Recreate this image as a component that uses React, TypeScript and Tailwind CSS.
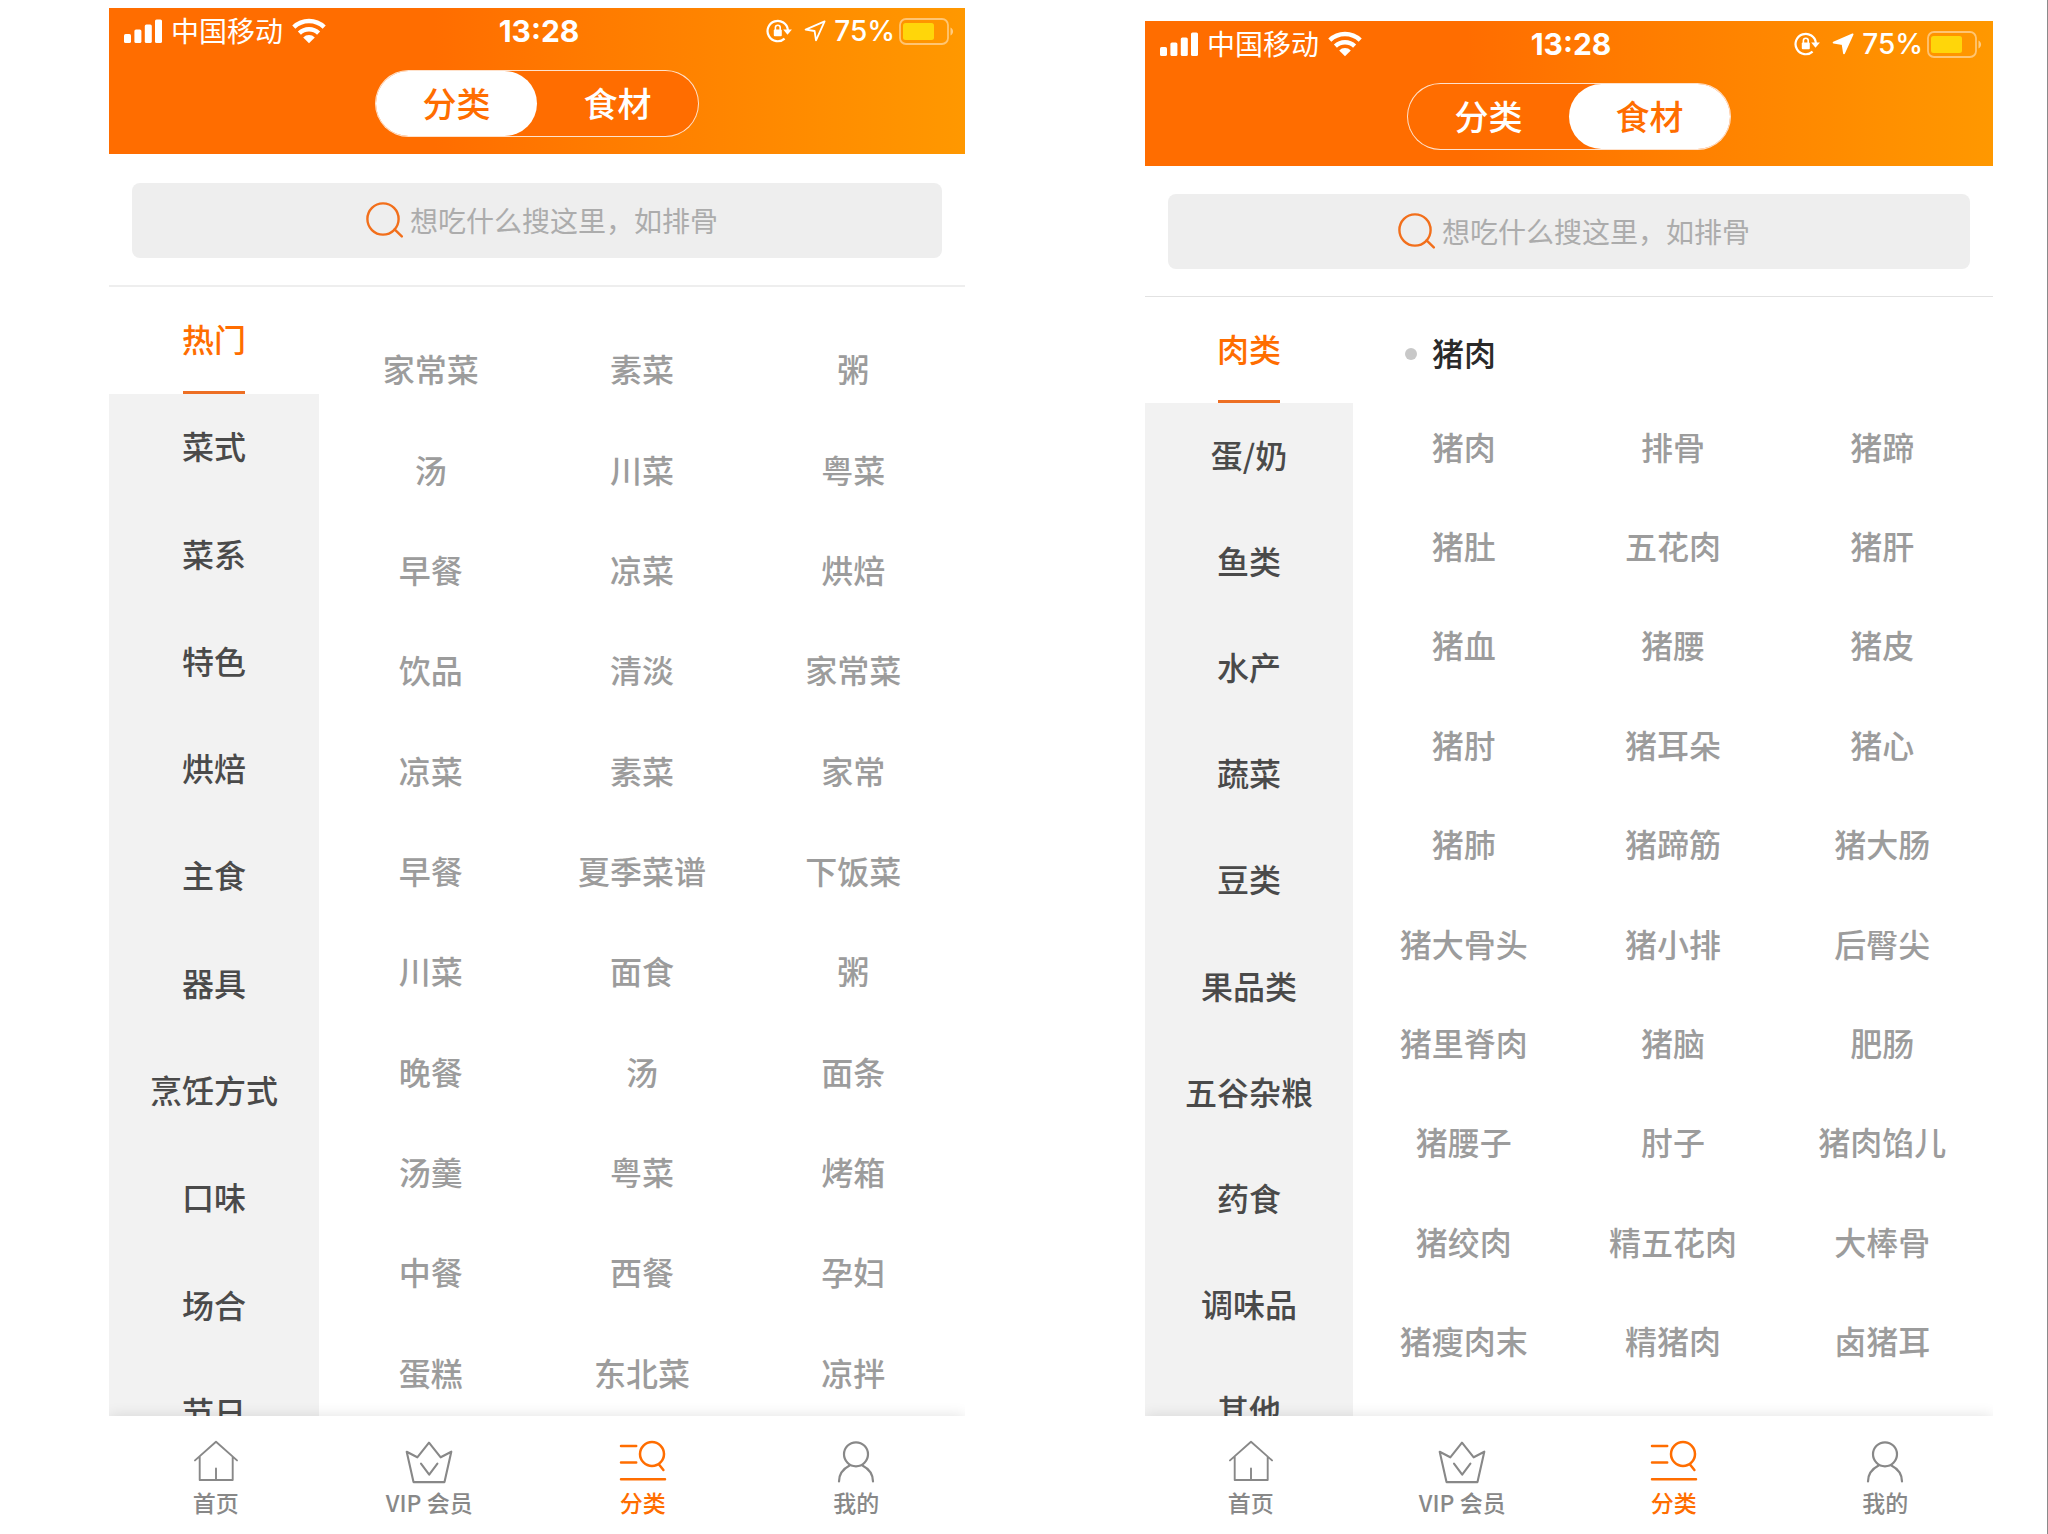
import { useState } from "react";
import type { ReactNode } from "react";
import clsx from "clsx";

const HOT_GROUPS = ["热门", "菜式", "菜系", "特色", "烘焙", "主食", "器具", "烹饪方式", "口味", "场合", "节日"];

const HOT_ITEMS = [
  "家常菜", "素菜", "粥",
  "汤", "川菜", "粤菜",
  "早餐", "凉菜", "烘焙",
  "饮品", "清淡", "家常菜",
  "凉菜", "素菜", "家常",
  "早餐", "夏季菜谱", "下饭菜",
  "川菜", "面食", "粥",
  "晚餐", "汤", "面条",
  "汤羹", "粤菜", "烤箱",
  "中餐", "西餐", "孕妇",
  "蛋糕", "东北菜", "凉拌",
];

const FOOD_GROUPS = ["肉类", "蛋/奶", "鱼类", "水产", "蔬菜", "豆类", "果品类", "五谷杂粮", "药食", "调味品", "其他"];

const FOOD_ITEMS = [
  "猪肉", "排骨", "猪蹄",
  "猪肚", "五花肉", "猪肝",
  "猪血", "猪腰", "猪皮",
  "猪肘", "猪耳朵", "猪心",
  "猪肺", "猪蹄筋", "猪大肠",
  "猪大骨头", "猪小排", "后臀尖",
  "猪里脊肉", "猪脑", "肥肠",
  "猪腰子", "肘子", "猪肉馅儿",
  "猪绞肉", "精五花肉", "大棒骨",
  "猪瘦肉末", "精猪肉", "卤猪耳",
];

function SignalIcon() {
  return (
    <svg className="h-[25px] w-[38px]" viewBox="0 0 38 25" fill="currentColor" aria-hidden="true">
      <rect x="0" y="15" width="7" height="9" rx="1.6" />
      <rect x="10.4" y="10.5" width="7" height="13.5" rx="1.6" />
      <rect x="20.8" y="5.5" width="7" height="18.5" rx="1.6" />
      <rect x="31" y="0.5" width="7" height="23.5" rx="1.6" />
    </svg>
  );
}

function WifiIcon() {
  return (
    <svg className="h-[26px] w-[34px]" viewBox="0 0 34 26" aria-hidden="true">
      <g fill="none" stroke="currentColor" strokeWidth="4.4">
        <path d="M1.8 9.2a21.8 21.8 0 0 1 30.4 0" />
        <path d="M7.4 15.2a13.8 13.8 0 0 1 19.2 0" />
      </g>
      <path d="M11.2 19.4a8.4 8.4 0 0 1 11.6 0L17 25.2z" fill="currentColor" />
    </svg>
  );
}

function RotationLockIcon() {
  return (
    <svg className="h-6 w-[26px]" viewBox="0 0 26 24" aria-hidden="true">
      <path d="M18.6 19.6A10.2 10.2 0 1 1 21.9 11" fill="none" stroke="currentColor" strokeWidth="2.2" />
      <path d="M17.2 10.4h8.7l-4.4 5.4z" fill="currentColor" />
      <rect x="7.8" y="10.4" width="8" height="6.8" rx="1" fill="currentColor" />
      <path d="M9.4 11V8.6a2.4 2.4 0 0 1 4.8 0V11" fill="none" stroke="currentColor" strokeWidth="1.6" />
    </svg>
  );
}

function LocationIcon({ filled }: { filled: boolean }) {
  return (
    <svg className="h-[22px] w-[22px]" viewBox="0 0 22 22" aria-hidden="true">
      <path
        d="M20.6 1.4 1.6 9.6l9 1.4 1.4 9.4z"
        fill={filled ? "currentColor" : "none"}
        stroke="currentColor"
        strokeWidth="1.8"
        strokeLinejoin="round"
      />
    </svg>
  );
}

function BatteryIcon() {
  return (
    <svg className="h-[27px] w-[55px]" viewBox="0 0 55 27" aria-hidden="true">
      <rect x="1" y="1" width="48" height="25" rx="6" fill="none" stroke="#fff" strokeOpacity="0.45" strokeWidth="1.8" />
      <rect x="4" y="5" width="31" height="17" rx="2.5" fill="#ffd60a" />
      <path d="M51.5 9.5c3.4 1.4 3.4 6.6 0 8z" fill="#fff" fillOpacity="0.5" />
    </svg>
  );
}

function SearchIcon() {
  return (
    <svg className="h-9 w-[38px] shrink-0" viewBox="0 0 38 36" fill="none" stroke="#f26f1b" strokeWidth="2.4" strokeLinecap="round" aria-hidden="true">
      <circle cx="17" cy="17" r="15.6" />
      <path d="M28.6 27.4l7.2 7" />
    </svg>
  );
}

function NavSvg({ children, width = 2 }: { children: ReactNode; width?: number }) {
  return (
    <svg className="h-11 w-12" viewBox="0 0 48 44" fill="none" stroke="currentColor" strokeWidth={width} strokeLinecap="round" strokeLinejoin="round" aria-hidden="true">
      {children}
    </svg>
  );
}

const NAV = [
  {
    label: "首页",
    icon: (
      <NavSvg width={1.9}>
        <path d="M3 20.4 24 1.8l21 18.6M7.7 16.8V40h33V16.8M24 28.4V40" />
      </NavSvg>
    ),
  },
  {
    label: "VIP 会员",
    icon: (
      <NavSvg width={2.1}>
        <path d="M1.7 11.7l10.6 5.6L24 2.7l11.7 14.6 10.6-5.6-6.8 30.4h-31z" />
        <path d="M16 23.6l8.2 11 8.2-11" />
      </NavSvg>
    ),
  },
  {
    label: "分类",
    icon: (
      <NavSvg width={2.5}>
        <path d="M2 6h15.2M2 22.4h15.2M2 39.3h44M40 24.4l4.4 5.6" />
        <circle cx="33" cy="14" r="12" />
      </NavSvg>
    ),
  },
  {
    label: "我的",
    icon: (
      <NavSvg width={2.2}>
        <circle cx="24" cy="14.3" r="12" />
        <path d="M17.6 25.4C10.6 29 7 34.6 7 41.4M30.4 25.4C37.4 29 41 34.6 41 41.4" />
      </NavSvg>
    ),
  },
];

type PhoneProps = {
  id: string;
  initialTab: string;
  groups: string[];
  items: string[];
  title?: string;
  locating: boolean;
  className: string;
  headerClass: string;
  dividerClass: string;
  sidebarClass: string;
  groupsClass: string;
  itemsClass: string;
};

function Phone(p: PhoneProps) {
  const [tab, setTab] = useState(p.initialTab);
  const [group, setGroup] = useState(p.groups[0]);

  return (
    <section className={clsx("flex min-h-0 min-w-0 flex-col overflow-hidden", p.className)}>
      <header className={clsx("bg-linear-to-r from-[#ff6d00] from-38% to-[#ff9800] text-white", p.headerClass)}>
        <div className="grid h-[46px] grid-cols-[1fr_auto_1fr] items-center pl-[15px] pr-[11px]">
          <div className="flex items-center gap-[9px]">
            <SignalIcon />
            <span className="pb-[2px] text-[28px] leading-none">中国移动</span>
            <WifiIcon />
          </div>
          <time className="font-['Inter'] text-[30px] font-bold leading-none">13:28</time>
          <div className="flex items-center justify-end">
            <RotationLockIcon />
            <span className="ml-3">
              <LocationIcon filled={p.locating} />
            </span>
            <span className="ml-2 mr-1 font-['Inter'] text-[28px] font-medium leading-none">75%</span>
            <BatteryIcon />
          </div>
        </div>
        <div className="mx-auto mt-4 flex h-[67px] w-[324px] rounded-full border border-white/80 bg-[#ff6d00]">
          {["分类", "食材"].map((name) => (
            <button
              key={name}
              type="button"
              aria-pressed={tab === name}
              onClick={() => setTab(name)}
              className={clsx(
                "flex-1 rounded-full pb-[2px] text-[34px] font-medium leading-none",
                tab === name ? "bg-white text-[#ff6d00]" : "text-white",
              )}
            >
              {name}
            </button>
          ))}
        </div>
      </header>

      <div className={clsx("px-[23px]", p.dividerClass)}>
        <label htmlFor={p.id} className="flex h-[75px] items-center justify-center gap-[6px] rounded-lg bg-[#eeeeee] pb-[2px] pl-3">
          <SearchIcon />
          <input
            id={p.id}
            type="text"
            aria-label="搜索"
            placeholder="想吃什么搜这里，如排骨"
            className="h-10 w-[310px] bg-transparent text-[28px] text-[#444] outline-none placeholder:text-[#acacac]"
          />
        </label>
      </div>

      <div className="flex min-h-0 flex-1 overflow-hidden">
        <aside className={clsx("shrink-0 overflow-hidden bg-[#f2f2f2]", p.sidebarClass)}>
          <div className={clsx("grid auto-rows-fr", p.groupsClass)}>
            {p.groups.map((name) => (
              <button
                key={name}
                type="button"
                onClick={() => setGroup(name)}
                className={clsx(
                  "relative flex items-center justify-center pb-[5px] text-[32px] font-medium leading-none",
                  name === group ? "bg-white text-[#ff6d00]" : "text-[#4a4a4a]",
                )}
              >
                {name}
                {name === group && <span className="absolute bottom-0 left-1/2 h-[3px] w-[62px] -translate-x-1/2 bg-[#ed6f24]" />}
              </button>
            ))}
          </div>
        </aside>
        <main className={clsx("min-w-0 flex-1 overflow-hidden", p.title ? "pt-3" : "pt-[33px]")}>
          {p.title && (
            <h2 className="flex h-[89px] items-center gap-[15px] pl-[52px] text-[32px] font-medium leading-none text-[#2a2a2a]">
              <span className="size-3 rounded-full bg-[#c8c8c8]" />
              <span className="pb-1">{p.title}</span>
            </h2>
          )}
          <div className={clsx("grid auto-rows-fr grid-cols-3 px-[6px]", p.itemsClass)}>
            {p.items.map((name, i) => (
              <button key={i} type="button" className="pb-1 text-[32px] font-medium leading-none text-[#9c9c9c]">
                {name}
              </button>
            ))}
          </div>
        </main>
      </div>

      <nav className="relative grid h-[118px] shrink-0 grid-cols-4 bg-white pr-[2px] pt-6 shadow-[0_0_14px_rgba(0,0,0,0.12)]">
        {NAV.map((n) => (
          <a key={n.label} href="#" className={clsx("flex flex-col items-center gap-[6px]", n.label === "分类" ? "text-[#ff6d00]" : "text-[#888]")}>
            {n.icon}
            <span className="text-[23px] font-medium leading-6">{n.label}</span>
          </a>
        ))}
      </nav>
    </section>
  );
}

export default function App() {
  return (
    <div className="grid h-screen grid-cols-[856fr_848fr] gap-[180px] overflow-hidden border-r border-[#8a8a8a] bg-white pl-[109px] pr-[54px] font-['Noto_Sans_CJK_SC',sans-serif]">
      <Phone
        id="search-category"
        initialTab="分类"
        groups={HOT_GROUPS}
        items={HOT_ITEMS}
        locating={false}
        className="pt-2"
        headerClass="pb-[17px]"
        dividerClass="border-b-2 border-[#eeeeee] pb-[27px] pt-[29px]"
        sidebarClass="w-[210px]"
        groupsClass="h-[1180px]"
        itemsClass="h-[1104px]"
      />
      <Phone
        id="search-ingredient"
        initialTab="食材"
        groups={FOOD_GROUPS}
        items={FOOD_ITEMS}
        title="猪肉"
        locating
        className="pt-[21px]"
        headerClass="pb-4"
        dividerClass="border-b border-[#e2e2e2] pb-[27px] pt-7"
        sidebarClass="w-[208px]"
        groupsClass="h-[1168px]"
        itemsClass="h-[994px]"
      />
    </div>
  );
}
